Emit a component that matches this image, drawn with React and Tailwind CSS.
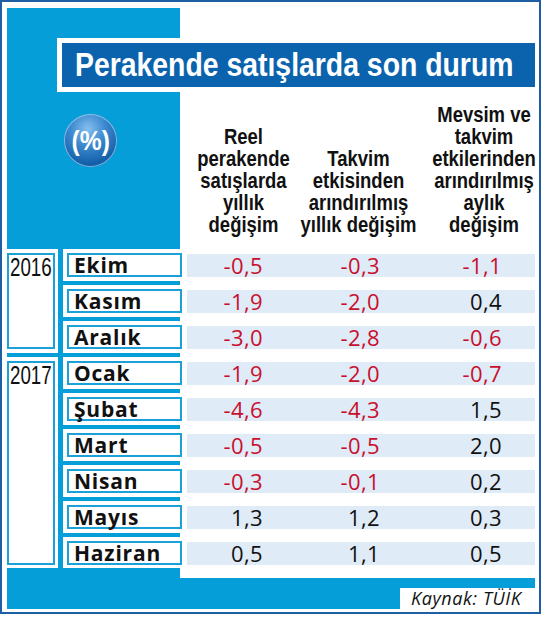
const BLUE = "bg-[#069ed9]";

const rows = [
  { m: "Ekim", v: ["-0,5", "-0,3", "-1,1"] },
  { m: "Kasım", v: ["-1,9", "-2,0", "0,4"] },
  { m: "Aralık", v: ["-3,0", "-2,8", "-0,6"] },
  { m: "Ocak", v: ["-1,9", "-2,0", "-0,7"] },
  { m: "Şubat", v: ["-4,6", "-4,3", "1,5"] },
  { m: "Mart", v: ["-0,5", "-0,5", "2,0"] },
  { m: "Nisan", v: ["-0,3", "-0,1", "0,2"] },
  { m: "Mayıs", v: ["1,3", "1,2", "0,3"] },
  { m: "Haziran", v: ["0,5", "1,1", "0,5"] },
];

const headers = [
  { w: "w-[107px]", lines: ["Reel", "perakende", "satışlarda", "yıllık", "değişim"] },
  { w: "w-[123px]", lines: ["Takvim", "etkisinden", "arındırılmış", "yıllık değişim"] },
  { w: "w-[128px]", lines: ["Mevsim ve", "takvim", "etkilerinden", "arındırılmış", "aylık", "değişim"] },
];

const cellW = ["w-[76px]", "w-[117px]", "w-[122px]"];

function Header() {
  return (
    <div className="h-[241px] shrink-0 flex flex-col bg-[linear-gradient(to_right,#069ed9_173px,#ffffff_173px)]">
      <div className="mt-[30px] ml-[50px] h-[54px] border-y-[5px] border-l-[5px] border-white bg-[#0c63ad] pl-[13px] flex items-center">
        <span className="inline-block origin-left scale-x-[0.86] whitespace-nowrap text-white font-bold text-[33px] leading-[44px] font-['Liberation_Sans',Arial,sans-serif]">
          Perakende satışlarda son durum
        </span>
      </div>
      <div className="flex h-[157px]">
        <div className="w-[173px] shrink-0">
          <div className="ml-[57px] mt-[22px] w-[53px] h-[53px] rounded-full bg-[radial-gradient(circle_at_45%_28%,#86c0ee_0%,#3d89cf_36%,#1461aa_72%,#0b4784_100%)] shadow-[inset_0_0_0_1px_rgba(170,210,245,0.7)] flex items-center justify-center">
            <span className="inline-block scale-x-[0.88] text-white font-bold text-[28px] leading-[28px] font-['Liberation_Sans',Arial,sans-serif]">
              (%)
            </span>
          </div>
        </div>
        <div className="flex items-end pb-[13px] pl-[10px]">
          {headers.map((h, i) => (
            <div
              key={i}
              className={`${h.w} shrink-0 flex flex-col items-center scale-x-[0.84] text-[22px] leading-[22px] font-bold text-[#111] font-['Liberation_Sans',Arial,sans-serif]`}
            >
              {h.lines.map((l) => (
                <div key={l} className="whitespace-nowrap">{l}</div>
              ))}
            </div>
          ))}
        </div>
      </div>
    </div>
  );
}

function YearBox({ year, h }) {
  return (
    <div className={`w-[48px] ${h} border-2 border-[#1ba0d8] bg-white flex justify-center`}>
      <span className="inline-block scale-x-[0.75] text-[25px] leading-[24px] text-[#111] font-['Liberation_Sans',Arial,sans-serif]">
        {year}
      </span>
    </div>
  );
}

function Rows() {
  return (
    <div className="h-[329px] shrink-0 flex">
      <div className="w-[51px] shrink-0 flex flex-col">
        <div className="h-[4px]" />
        <YearBox year="2016" h="h-[96px]" />
        <div className="h-[4px]" />
        <div className={`h-[4px] ${BLUE}`} />
        <div className="h-[4px]" />
        <YearBox year="2017" h="h-[204px]" />
        <div className="h-[3px]" />
        <div className={`h-[10px] ${BLUE}`} />
      </div>
      <div className={`w-[5px] shrink-0 ${BLUE}`} />
      <div className="w-[119px] shrink-0 flex flex-col pt-[4px]">
        {rows.map((r, i) => (
          <div key={r.m}>
            <div className="ml-[4px] w-[115px] h-[24px] border-2 border-[#1ba0d8] bg-white pl-[5px] text-[21px] leading-[20px] font-bold tracking-[0.8px] text-[#111] font-['Open_Sans',sans-serif]">
              {r.m}
            </div>
            {i < rows.length - 1 ? (
              <div className="py-[4px]">
                <div className={`w-[117px] h-[4px] ${BLUE}`} />
              </div>
            ) : (
              <div className="pt-[3px]">
                <div className={`w-[117px] h-[10px] ${BLUE}`} />
              </div>
            )}
          </div>
        ))}
      </div>
      <div className="w-[353px] shrink-0 flex flex-col gap-[13px] pt-[5px] pl-[5px]">
        {rows.map((r) => (
          <div key={r.m} className="w-[348px] h-[23px] bg-[#dfebf7] flex text-[22px] leading-[23px] tracking-[0.4px] font-['Open_Sans',sans-serif]">
            {r.v.map((v, j) => (
              <div
                key={j}
                className={`${cellW[j]} shrink-0 text-right ${v.startsWith("-") ? "text-[#c8102e]" : "text-[#111]"}`}
              >
                {v}
              </div>
            ))}
          </div>
        ))}
      </div>
    </div>
  );
}

function Footer() {
  return (
    <div className={`h-[31px] shrink-0 ${BLUE} flex justify-end items-end`}>
      <div className="w-[135px] h-[21px] bg-white pl-[11px] italic text-[18px] leading-[21px] tracking-[0.6px] text-[#111] font-['Open_Sans',sans-serif]">
        Kaynak: TÜİK
      </div>
    </div>
  );
}

export default function App() {
  return (
    <div className="w-[544px] h-[617px] bg-white">
      <div className="w-[541px] h-[614px] border-2 border-[#1e5fa3] pl-[5px] pt-[6px] pr-[4px] pb-[3px] flex flex-col">
        <Header />
        <Rows />
        <Footer />
      </div>
    </div>
  );
}
